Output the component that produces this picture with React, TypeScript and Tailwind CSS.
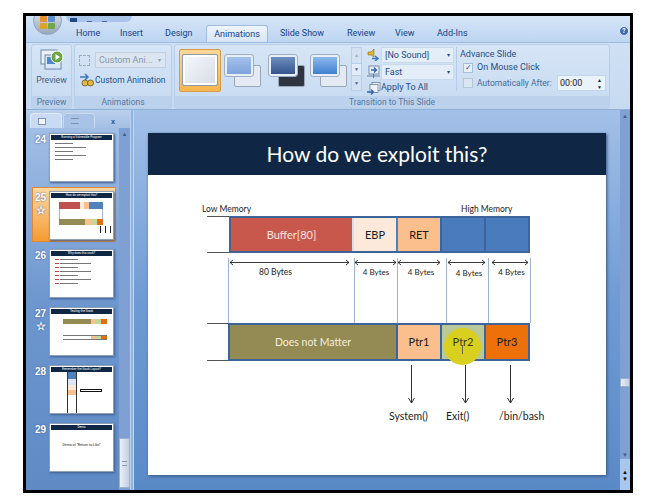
import React from "react";

const F = "font-['Roboto',sans-serif]";

function Transition({ kind }: { kind: number }) {
  const back = kind === 1 ? "bg-[#2f3540]" : "bg-[#e4eaf3]";
  const front =
    kind === 1
      ? "bg-gradient-to-b from-[#6e8fc0] to-[#35558c]"
      : kind === 2
        ? "bg-gradient-to-b from-[#8db8ec] to-[#3f7fd0]"
        : "bg-gradient-to-b from-[#a4c2ec] to-[#7ea3dc]";
  return (
    <div className="relative w-[36px] h-[32px] shrink-0">
      <div className={`absolute right-0 bottom-0 w-[27px] h-[22px] rounded-[2px] border border-[#9aa6b6] ${back}`} />
      <div className={`absolute left-0 top-0 w-[28px] h-[21px] rounded-[2px] border-2 border-[#e8eef6] outline outline-1 outline-[#9fb0c6] ${front}`} />
    </div>
  );
}

function Lines({ n, red }: { n: number; red?: boolean }) {
  return (
    <div className="flex flex-col gap-[3px] pl-[5px] pt-[3px]">
      {Array.from({ length: n }).map((_, i) => (
        <div key={i} className="flex gap-[1px] items-center">
          {red && <div className="w-[4px] h-[1px] bg-[#c8473c]" />}
          <div className="h-[1px] bg-[#777]" style={{ width: 18 + ((i * 13) % 26) }} />
        </div>
      ))}
    </div>
  );
}

function MiniDiagram() {
  return (
    <div className="flex flex-col pl-[9px] pt-[4px]">
      <div className="flex h-[7px] w-[44px]">
        <div className="w-[21px] bg-[#c0504d]" />
        <div className="w-[4px] bg-[#fde9d9]" />
        <div className="w-[5px] bg-[#fac090]" />
        <div className="flex-1 bg-[#4f81bd]" />
      </div>
      <div className="h-[10px] w-[44px] border-x border-[#9db3d4]" />
      <div className="flex h-[6px] w-[44px]">
        <div className="w-[26px] bg-[#948a54]" />
        <div className="w-[6px] bg-[#fac090]" />
        <div className="w-[6px] bg-[#c3d69b]" />
        <div className="flex-1 bg-[#e46c0a]" />
      </div>
      <div className="flex justify-end gap-[4px] pr-[2px] pt-[1px]">
        <div className="w-[1px] h-[7px] bg-[#222]" />
        <div className="w-[1px] h-[7px] bg-[#222]" />
        <div className="w-[1px] h-[7px] bg-[#222]" />
      </div>
    </div>
  );
}

function Thumb({ n, star, active, children }: { n: number; star?: boolean; active?: boolean; children: React.ReactNode }) {
  return (
    <div className={`flex h-[55px] w-[84px] items-start pl-[1px] pt-[3px] ${active ? "bg-gradient-to-b from-[#fbd9a0] to-[#f59a2e] border border-[#d58a3c]" : "border border-transparent"}`}>
      <div className="w-[13px] flex flex-col items-center text-white font-bold text-[10px] leading-[12px] font-['Liberation_Sans',sans-serif] [text-shadow:0_0_2px_#34558a]">
        <span className="pt-[1px]">{n}</span>
        {star && <span className="text-[11px] leading-[12px] font-bold">☆</span>}
      </div>
      <div className="w-[65px] h-[49px] bg-white border border-[#8fa0b8] shadow-[1px_1px_2px_#3d5f90] ml-[2px] overflow-hidden">
        {children}
      </div>
    </div>
  );
}

function ThumbHead({ t }: { t: string }) {
  return (
    <div className="h-[5px] mx-[1px] mt-[1px] bg-[#0f2744] text-white text-[3px] leading-[5px] text-center overflow-hidden whitespace-nowrap">{t}</div>
  );
}

function Group({ w, label, children }: { w: string; label: string; children: React.ReactNode }) {
  return (
    <div className={`${w} h-[65px] shrink-0 rounded-[3px] border border-[#b8cfe9] bg-gradient-to-b from-[#d6e5f6] to-[#c6daf1] flex flex-col overflow-hidden`}>
      <div className="flex-1 min-h-0">{children}</div>
      <div className="h-[12px] bg-[#bcd2ec] text-center text-[8.5px] leading-[12px] text-[#56779f]">{label}</div>
    </div>
  );
}

function SoundIcon() {
  return (
    <svg width="13" height="13" viewBox="0 0 13 13" className="shrink-0">
      <path d="M1 4h3l3-3v8L4 7H1Z" fill="#e0b52e" stroke="#7a5f1c" strokeWidth="0.5" />
      <path d="M5 10.5h5M8 8l3 2.5L8 13" fill="none" stroke="#3f76bd" strokeWidth="1.5" />
    </svg>
  );
}

function FastIcon() {
  return (
    <svg width="13" height="13" viewBox="0 0 13 13" className="shrink-0">
      <rect x="2" y="1" width="10" height="8" fill="#e6eef8" stroke="#51698c" strokeWidth="0.7" />
      <path d="M4 5h5M7 2.5L9.5 5L7 7.5" fill="none" stroke="#2f68b4" strokeWidth="1.3" />
      <path d="M0 11h13M6.5 9v4" stroke="#51698c" strokeWidth="0.8" />
    </svg>
  );
}

function ApplyIcon() {
  return (
    <svg width="14" height="13" viewBox="0 0 14 13" className="shrink-0">
      <rect x="5" y="0.5" width="8" height="8" fill="#eef3fa" stroke="#5a7396" strokeWidth="0.7" />
      <rect x="3" y="2.5" width="8" height="8" fill="#eef3fa" stroke="#5a7396" strokeWidth="0.7" />
      <path d="M0 10h6M4 7.5L6.5 10L4 12.5" fill="none" stroke="#2f68b4" strokeWidth="1.4" />
    </svg>
  );
}

function Arrow2({ w, className }: { w: number; className: string }) {
  return (
    <svg className={`absolute ${className}`} width={w} height="7" viewBox={`0 0 ${w} 7`}>
      <path d={`M1 3.5H${w - 1}M4 1L1 3.5L4 6M${w - 4} 1L${w - 1} 3.5L${w - 4} 6`} fill="none" stroke="#222" strokeWidth="0.9" />
    </svg>
  );
}

function ArrowDown({ className }: { className: string }) {
  return (
    <svg className={`absolute ${className}`} width="9" height="39" viewBox="0 0 9 39">
      <path d="M4.5 0V38M1.5 33L4.5 38L7.5 33" fill="none" stroke="#333" strokeWidth="1" />
    </svg>
  );
}

export default function App() {
  return (
    <div className={`w-[658px] h-[500px] bg-white pt-[13px] pl-[23px] overflow-hidden ${F}`}>
      <div className="w-[610px] h-[480px] border-[3px] border-black bg-[#bfd7f3] flex flex-col overflow-hidden">
        <div className="flex-1 min-h-0 flex flex-col blur-[0.45px]">
          {/* top / tabs */}
          <div className="relative h-[26px] shrink-0 bg-gradient-to-b from-[#d6e5f7] to-[#bdd5f2] flex items-end pl-[50px] text-[9px] leading-[17px] text-[#15428b]">
            <div className="absolute left-[40px] top-0 h-[6px] w-[66px] rounded-b-[8px] bg-[#a9c4e8] flex items-end gap-[10px] pl-[4px]">
              <div className="w-[7px] h-[4px] bg-[#234a80]" />
              <div className="w-[5px] h-[3px] border-b border-[#4a6a96]" />
              <div className="w-[5px] h-[3px] border-b border-[#4a6a96]" />
            </div>
            <div className="absolute left-[7px] -top-[10px] w-[29px] h-[29px] rounded-full bg-gradient-to-b from-[#e8eef6] to-[#98a7ba] border border-[#8ea4c2] flex items-center justify-center pt-[3px]">
              <div className="grid grid-cols-2 gap-[1px] w-[15px] h-[13px]">
                <div className="bg-[#e8902c] rounded-[1px]" />
                <div className="bg-[#5b8fd0] rounded-[1px]" />
                <div className="bg-[#d9a32c] rounded-[1px]" />
                <div className="bg-[#72a84c] rounded-[1px]" />
              </div>
            </div>
            <div className="w-[44px]">Home</div>
            <div className="w-[45px]">Insert</div>
            <div className="w-[41px]">Design</div>
            <div className="w-[62px] h-[17px] bg-gradient-to-b from-[#eef5fd] to-[#d6e5f6] border border-b-0 border-[#9fbcdf] rounded-t-[3px] text-center">Animations</div>
            <div className="w-[79px] pl-[12px]">Slide Show</div>
            <div className="w-[48px]">Review</div>
            <div className="w-[42px]">View</div>
            <div className="w-[40px]">Add-Ins</div>
            <div className="absolute right-[1px] top-[10px] w-[10px] h-[10px] rounded-full bg-[#3c69ae] border border-[#dfe9f6] text-white text-[7px] leading-[8px] text-center font-bold">?</div>
          </div>

          {/* ribbon */}
          <div className="h-[68px] shrink-0 bg-gradient-to-b from-[#cfe0f4] to-[#c6daf1] border-t border-[#9fbcdf] border-b border-b-[#8fb0d8] flex gap-[2px] pl-[5px] pt-[1px] text-[9px] text-[#15428b]">
            <Group w="w-[41px]" label="Preview">
              <div className="flex flex-col items-center pt-[3px]">
                <svg width="24" height="24" viewBox="0 0 24 24">
                  <rect x="1" y="2" width="16" height="14" fill="#eaf1fa" stroke="#6d86a8" />
                  <rect x="5" y="7" width="16" height="14" fill="#dbe7f5" stroke="#6d86a8" />
                  <rect x="7" y="9" width="8" height="7" fill="#4f86cc" />
                  <circle cx="17" cy="9" r="6" fill="#6ca544" stroke="#fff" />
                  <path d="M15.5 6L20 9L15.5 12Z" fill="#fff" />
                </svg>
                <div className="text-[8.75px] leading-[12px] pt-[2px] text-[#3f5e88]">Preview</div>
              </div>
            </Group>
            <Group w="w-[98px]" label="Animations">
              <div className="flex flex-col pl-[4px] pt-[7px] gap-[5px]">
                <div className="flex items-center gap-[5px]">
                  <div className="w-[11px] h-[11px] border border-dashed border-[#a3aebd]" />
                  <div className="w-[71px] h-[16px] bg-[#dbe5f1] border border-[#c4d0e0] text-[#8796a8] leading-[14px] pl-[3px] flex justify-between pr-[4px]">
                    <span>Custom Ani...</span>
                    <span className="text-[6px]">▾</span>
                  </div>
                </div>
                <div className="flex items-center gap-[1px]">
                  <svg width="15" height="14" viewBox="0 0 15 14" className="shrink-0">
                    <path d="M1 4h7M6 1l3 3-3 3" fill="none" stroke="#3f76bd" strokeWidth="1.5" />
                    <circle cx="6" cy="10" r="3" fill="#e5b93a" stroke="#54452a" strokeWidth="0.7" />
                    <circle cx="11.5" cy="10" r="3" fill="#e5b93a" stroke="#54452a" strokeWidth="0.7" />
                  </svg>
                  <span className="whitespace-nowrap text-[#264f88] text-[8.5px]">Custom Animation</span>
                </div>
              </div>
            </Group>
            <Group w="w-[436px]" label="Transition to This Slide">
              <div className="flex h-full">
                <div className="flex items-center pl-[4px] w-[176px] shrink-0">
                  <div className="w-[42px] h-[43px] mt-[-1px] shrink-0 rounded-[2px] bg-gradient-to-b from-[#fbd89a] to-[#f7b64c] border border-[#d99a44] flex items-center justify-center">
                    <div className="w-[34px] h-[30px] bg-gradient-to-br from-[#f4f6f9] to-[#d8dee8] border-2 border-white outline outline-1 outline-[#8d99a8] rounded-[1px]" />
                  </div>
                  <div className="ml-[4px]"><Transition kind={0} /></div>
                  <div className="ml-[8px]"><Transition kind={1} /></div>
                  <div className="ml-[6px]"><Transition kind={2} /></div>
                </div>
                <div className="flex flex-col w-[11px] shrink-0 h-[44px] mt-[2px] border border-[#b8cfe9]">
                  <div className="h-[15px] bg-[#d3e1f2] text-[5px] leading-[14px] text-center text-[#9fb0c6]">▲</div>
                  <div className="h-[13px] bg-[#e2ecf8] border-y border-[#b8cfe9] text-[5px] leading-[11px] text-center text-[#44658f]">▼</div>
                  <div className="flex-1 bg-[#d3e1f2] text-[5px] leading-[14px] text-center text-[#44658f]">▼</div>
                </div>
                <div className="flex flex-col pl-[5px] pt-[1px] w-[94px] shrink-0">
                  <div className="flex items-center gap-[1px] h-[17px]">
                    <SoundIcon />
                    <div className="w-[73px] h-[16px] bg-[#e4eef9] border border-[#c9d9ec] flex justify-between px-[3px] leading-[14px] text-[#1e4a86]"><span>[No Sound]</span><span className="text-[6px]">▾</span></div>
                  </div>
                  <div className="flex items-center gap-[1px] h-[17px]">
                    <FastIcon />
                    <div className="w-[73px] h-[16px] bg-[#e4eef9] border border-[#c9d9ec] flex justify-between px-[3px] leading-[14px] text-[#1e4a86]"><span>Fast</span><span className="text-[6px]">▾</span></div>
                  </div>
                  <div className="flex items-center gap-[0px] h-[16px]">
                    <ApplyIcon />
                    <span className="text-[#264f88]">Apply To All</span>
                  </div>
                </div>
                <div className="flex flex-col border-l border-[#b5cbe6] h-[44px] mt-[2px] pl-[3px] text-[#264f88] flex-1">
                  <div className="h-[14px] leading-[14px]">Advance Slide</div>
                  <div className="flex items-center h-[17px] pl-[3px] gap-[4px]">
                    <div className="w-[10px] h-[10px] bg-[#e6eef8] border border-[#a9bdd6] text-[8px] leading-[8px] text-center text-[#344f78]">✓</div>
                    <span>On Mouse Click</span>
                  </div>
                  <div className="flex items-center h-[16px] pl-[3px] gap-[4px] whitespace-nowrap">
                    <div className="w-[10px] h-[10px] bg-[#dbe6f3] border border-[#b5c6da]" />
                    <span className="w-[76px] text-[#48699a] text-[8.5px]">Automatically After:</span>
                    <div className="w-[49px] h-[16px] bg-[#eaf2fb] border border-[#c4d5e9] flex justify-between pl-[2px] pr-[3px] leading-[14px] text-[#222]">
                      <span>00:00</span>
                      <span className="text-[5px] leading-[7px] pt-[1px] text-center">▲<br />▼</span>
                    </div>
                  </div>
                </div>
              </div>
            </Group>
          </div>

          {/* main */}
          <div className="flex-1 min-h-0 flex">
            {/* slides panel */}
            <div className="w-[105px] shrink-0 flex flex-col bg-gradient-to-b from-[#a7c2e8] via-[#6e97cf] to-[#5f8ac4] border-r border-[#bcd3ef]">
              <div className="h-[18px] shrink-0 flex items-end pl-[4px] gap-[1px] bg-gradient-to-b from-[#bad0ec] to-[#a4bfe4]">
                <div className="w-[32px] h-[15px] bg-[#c9dbf2] rounded-t-[4px] border border-b-0 border-[#e0eaf7] flex items-center justify-center pr-[8px]">
                  <div className="w-[8px] h-[7px] bg-[#f2f5fa] border border-[#7f93ad]" />
                </div>
                <div className="w-[32px] h-[15px] bg-[#a9c3e6] rounded-t-[4px] border border-b-0 border-[#c7d9ef] flex items-center justify-center pr-[8px]">
                  <div className="w-[8px] h-[6px] border-y border-[#7f93ad]" />
                </div>
                <div className="ml-[15px] text-[8px] leading-[13px] font-bold text-[#3f5f8c]">x</div>
              </div>
              <div className="flex-1 min-h-0 flex">
                <div className="w-[93px] shrink-0 flex flex-col gap-[3px] pt-[1px] pl-[6px]">
                  <Thumb n={24}>
                    <ThumbHead t="Running a Vulnerable Program" />
                    <Lines n={5} />
                  </Thumb>
                  <Thumb n={25} star active>
                    <ThumbHead t="How do we exploit this?" />
                    <MiniDiagram />
                  </Thumb>
                  <Thumb n={26}>
                    <ThumbHead t="Why does this work?" />
                    <Lines n={7} red />
                  </Thumb>
                  <Thumb n={27} star>
                    <ThumbHead t="Testing the Stack" />
                    <div className="flex flex-col gap-[11px] pl-[13px] pt-[5px]">
                      <div className="flex h-[5px] w-[44px]"><div className="w-[28px] bg-[#948a54]" /><div className="w-[5px] bg-[#fac090]" /><div className="w-[5px] bg-[#c3d69b]" /><div className="w-[6px] bg-[#e46c0a]" /></div>
                      <div className="flex h-[5px] w-[44px] border-y border-[#777]"><div className="w-[28px]" /><div className="w-[5px] bg-[#fac090]" /><div className="w-[5px] bg-[#c3d69b]" /><div className="w-[6px] bg-[#e46c0a]" /></div>
                    </div>
                  </Thumb>
                  <Thumb n={28}>
                    <ThumbHead t="Remember the Stack Layout?" />
                    <div className="flex pl-[17px]">
                      <div className="w-[10px] h-[43px] border-x border-[#333] flex flex-col">
                        <div className="h-[7px] bg-[#4f81bd]" />
                        <div className="h-[6px] bg-[#dce6f2]" />
                        <div className="h-[5px] bg-[#fde9d9]" />
                        <div className="h-[5px] bg-[#fac090]" />
                      </div>
                      <div className="w-[22px] h-[3px] mt-[17px] ml-[3px] border border-[#111]" />
                    </div>
                  </Thumb>
                  <Thumb n={29}>
                    <ThumbHead t="Demo" />
                    <div className="text-[3.5px] leading-[5px] text-center text-[#222] pt-[13px] whitespace-nowrap">Demo of "Return to Libc"</div>
                  </Thumb>
                </div>
                <div className="flex-1 flex flex-col items-center bg-[#7ea0d2]">
                  <div className="text-[6px] leading-[12px] text-[#3f5f8c]">▲</div>
                  <div className="flex-1" />
                  <div className="w-full h-[50px] mb-[2px] bg-gradient-to-r from-[#eaf0f8] to-[#c3d0e2] border border-[#9bb0cf] flex items-center justify-center">
                    <div className="w-[5px] h-[5px] border-y border-[#8a98ac]" />
                  </div>
                </div>
              </div>
            </div>
            <div className="w-[2px] bg-[#8fb3e2] shrink-0" />

            {/* slide area */}
            <div className="flex-1 min-w-0 bg-gradient-to-b from-[#a3c0e8] via-[#6f9bd3] to-[#5a8ac6] pl-[14px] pt-[23px] border-l border-[#c3d8f2]">
              <div className="relative w-[458px] h-[342px] bg-white shadow-[1px_1px_3px_#35557f] font-['Lato',sans-serif] text-[#1c1c1c]">
                <div className="h-[42px] bg-[#0f2744] text-white text-[21px] leading-[42px] text-center">How do we exploit this?</div>

                <div className="absolute left-[54px] top-[70px] text-[8.5px] leading-[12px] whitespace-nowrap">Low Memory</div>
                <div className="absolute left-[313px] top-[70px] text-[8.5px] leading-[12px] whitespace-nowrap">High Memory</div>

                {/* left ticks */}
                <div className="absolute left-[59px] top-[83px] w-[22px] h-[37px] border-y border-[#555]" />
                <div className="absolute left-[59px] top-[190px] w-[21px] h-[38px] border-y border-[#555]" />

                {/* row 1 */}
                <div className="absolute left-[81px] top-[83px] w-[301px] h-[37px] flex text-[11px] leading-[33px] text-center border-2 border-[#3d659c]">
                  <div className="w-[123px] bg-[#c9584c] text-[#f8e6e2] border-r-2 border-[#d8dfe8]">Buffer[80]</div>
                  <div className="w-[44px] bg-[#fde9d9] border-r-2 border-[#4f81bd]">EBP</div>
                  <div className="w-[44px] bg-[#fbbe8d] border-r-2 border-[#3d659c]">RET</div>
                  <div className="w-[44px] bg-[#4a7cbd] border-r-2 border-[#3d659c]" />
                  <div className="flex-1 bg-[#4a7cbd]" />
                </div>

                {/* byte columns */}
                <div className="absolute left-[80px] top-[125px] flex h-[65px] text-[8px] leading-[12px] text-center">
                  <div className="w-[126px] border-l border-[#9db3d4]"><div className="pt-[8px] pr-[32px] text-[8.5px]">80 Bytes</div></div>
                  <div className="w-[43px] border-l border-[#9db3d4]"><div className="pt-[8px]">4 Bytes</div></div>
                  <div className="w-[49px] border-l border-[#9db3d4]"><div className="pt-[8px] pr-[2px]">4 Bytes</div></div>
                  <div className="w-[42px] border-l border-[#9db3d4]"><div className="pt-[9px] pl-[3px]">4 Bytes</div></div>
                  <div className="w-[43px] border-x border-[#9db3d4]"><div className="pt-[8px] pl-[4px]">4 Bytes</div></div>
                </div>
                <Arrow2 w={121} className="left-[81px] top-[126px]" />
                <Arrow2 w={43} className="left-[206px] top-[126px]" />
                <Arrow2 w={44} className="left-[249px] top-[126px]" />
                <Arrow2 w={39} className="left-[299px] top-[126px]" />
                <Arrow2 w={38} className="left-[343px] top-[126px]" />

                {/* row 2 */}
                <div className="absolute left-[80px] top-[190px] w-[302px] h-[38px] flex text-[11px] leading-[34px] text-center border-2 border-[#3d659c]">
                  <div className="w-[168px] bg-[#948a54] text-[#f3eddc] border-r-2 border-[#3d659c] text-[10.5px]">Does not Matter</div>
                  <div className="w-[44px] bg-[#fbbe8d] border-r-2 border-[#3d659c]">Ptr1</div>
                  <div className="relative w-[44px] bg-[#b9c99a] border-r-2 border-[#3d659c]">
                    <div className="absolute left-[2px] top-[3px] w-[37px] h-[37px] rounded-full bg-[#d9cf1e]" />
                    <div className="relative text-[#3a3a20]">Ptr2</div>
                    <div className="absolute left-[20px] top-[21px] w-[1px] h-[8px] bg-[#666]" />
                  </div>
                  <div className="flex-1 bg-[#ee7008]">Ptr3</div>
                </div>

                <ArrowDown className="left-[259px] top-[232px]" />
                <ArrowDown className="left-[313px] top-[232px]" />
                <ArrowDown className="left-[358px] top-[232px]" />

                <div className="absolute left-[241px] top-[277px] text-[10.5px] leading-[13px]">System()</div>
                <div className="absolute left-[298px] top-[277px] text-[10.5px] leading-[13px]">Exit()</div>
                <div className="absolute left-[351px] top-[277px] text-[10.5px] leading-[13px]">/bin/bash</div>
              </div>
            </div>

            {/* right scrollbar */}
            <div className="w-[10px] shrink-0 flex flex-col items-center bg-[#7ea0d2]">
              <div className="text-[6px] leading-[12px] text-[#3f5f8c]">▲</div>
              <div className="h-[256px]" />
              <div className="w-full h-[9px] bg-gradient-to-r from-[#e8eef6] to-[#c3d0e2] border border-[#9bb0cf]" />
              <div className="flex-1" />
              <div className="text-[6px] leading-[8px] text-[#3f5f8c]">▼</div>
              <div className="w-full h-[31px] bg-[#a9c6ee] flex flex-col items-center justify-center text-[6px] leading-[7px] text-[#111]">
                <span>▲</span>
                <span>▼</span>
              </div>
            </div>
          </div>
        </div>
      </div>
    </div>
  );
}
